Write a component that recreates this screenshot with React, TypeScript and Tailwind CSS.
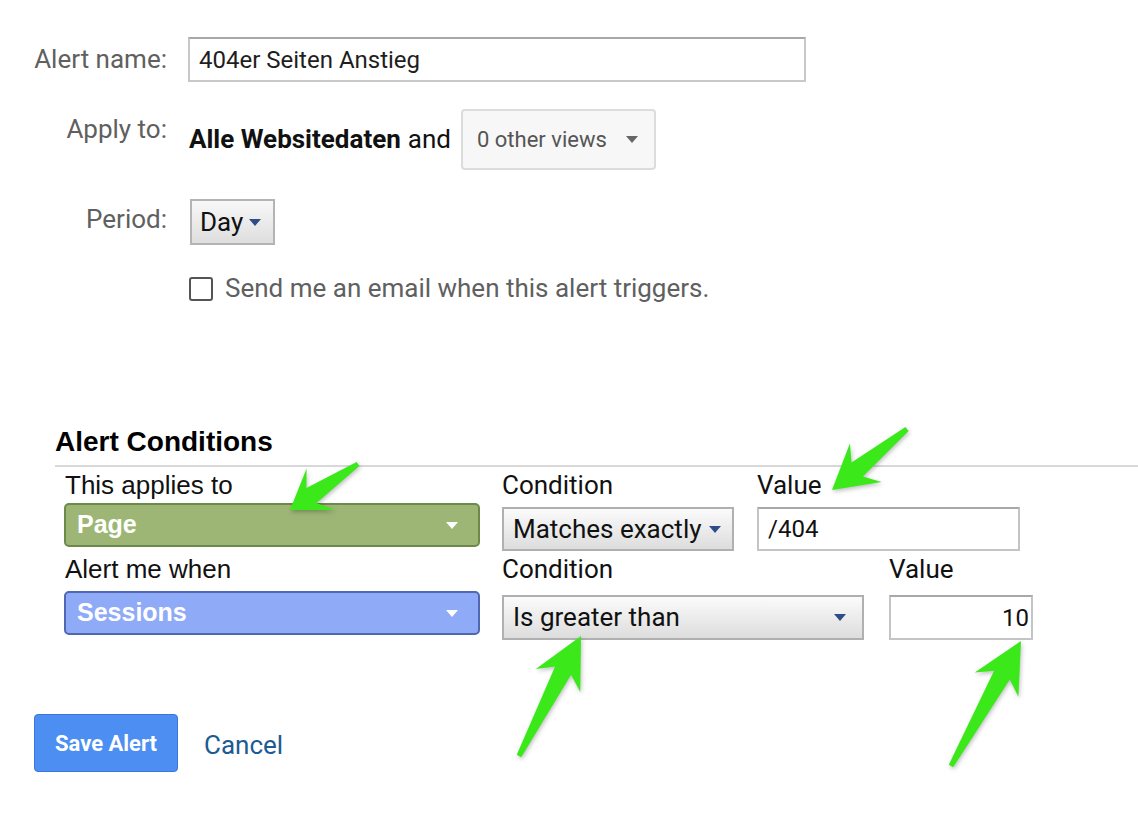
import React from "react";

type Pt = [number, number];

// green annotation arrow, drawn from tail to tip
function Arrow({ tail, tip }: { tail: Pt; tip: Pt }) {
  const dx = tip[0] - tail[0];
  const dy = tip[1] - tail[1];
  const len = Math.hypot(dx, dy);
  const ux = dx / len;
  const uy = dy / len;
  const nx = -uy;
  const ny = ux;
  const headLen = Math.min(50, len * 0.45);
  const headW = 25;
  const neckW = 9;
  const tailW = 2.5;
  const base: Pt = [tip[0] - ux * headLen, tip[1] - uy * headLen];
  const neck: Pt = [tip[0] - ux * (headLen - 11), tip[1] - uy * (headLen - 11)];
  const pts: Pt[] = [
    [tail[0] + nx * tailW, tail[1] + ny * tailW],
    [neck[0] + nx * neckW, neck[1] + ny * neckW],
    [base[0] + nx * headW, base[1] + ny * headW],
    tip,
    [base[0] - nx * headW, base[1] - ny * headW],
    [neck[0] - nx * neckW, neck[1] - ny * neckW],
    [tail[0] - nx * tailW, tail[1] - ny * tailW],
  ];
  return (
    <polygon
      points={pts.map((p) => p.join(",")).join(" ")}
      fill="#3be81a"
      style={{ filter: "drop-shadow(1px 2px 2px rgba(0,0,0,0.25))" }}
    />
  );
}

function Caret({ color }: { color: string }) {
  return (
    <svg width="12" height="7" viewBox="0 0 12 7" className="shrink-0">
      <path d="M0 0 L12 0 L6 7 Z" fill={color} />
    </svg>
  );
}

export default function App() {
  return (
    <div className="relative w-[1138px] h-[814px] overflow-hidden bg-white font-['Roboto',sans-serif]">
      {/* Alert settings */}
      <div className="pt-[37px]">
        <div className="flex items-center">
          <div className="w-[167px] text-right text-[26px] text-[#606060]">Alert name:</div>
          <div className="ml-[21px] w-[618px] h-[45px] border-2 border-[#c8c8c8] border-t-[#a8a8a8] flex items-center px-[9px] text-[24px] text-[#1e1e1e]">
            404er Seiten Anstieg
          </div>
        </div>

        <div className="flex items-start mt-[27px]">
          <div className="w-[167px] text-right text-[26px] text-[#606060] mt-[1px]">Apply to:</div>
          <div className="ml-[22px] flex items-center h-[61px] text-[26px] text-[#111]">
            <span className="font-bold">Alle Websitedaten</span>
            <span className="ml-[7px]">and</span>
            <div className="ml-[10px] w-[195px] h-[61px] rounded-[4px] border-2 border-[#dcdcdc] bg-[#f7f7f7] flex items-center justify-between pl-[14px] pr-[16px] text-[22px] text-[#555]">
              <span>0 other views</span>
              <Caret color="#666" />
            </div>
          </div>
        </div>

        <div className="flex items-start mt-[29px]">
          <div className="w-[167px] text-right text-[26px] text-[#606060] mt-[1px]">Period:</div>
          <div className="ml-[23px] w-[85px] h-[46px] border-2 border-[#b4b4b4] bg-gradient-to-b from-[#f8f8f8] to-[#dedede] flex items-center gap-[6px] pl-[8px] text-[26px] text-[#111]">
            <span>Day</span>
            <Caret color="#2f4c8a" />
          </div>
        </div>

        <div className="flex items-center mt-[24px] ml-[189px]">
          <div className="w-[24px] h-[24px] rounded-[3px] border-2 border-[#555] bg-white" />
          <span className="ml-[12px] text-[26px] text-[#606060]">Send me an email when this alert triggers.</span>
        </div>
      </div>

      {/* Alert conditions */}
      <div className="mt-[118px] font-['Liberation_Sans',sans-serif]">
        <div className="pl-[55px] text-[28px] font-bold text-black leading-[32px]">Alert Conditions</div>
        <div className="ml-[55px] mt-[7px] h-[2px] bg-[#d8d8d8]" />

        <div className="flex items-start h-[80px] pl-[64px]">
          <div className="w-[416px]">
            <div className="h-[36px] flex items-center pl-[1px] text-[26px] text-[#111]">This applies to</div>
            <div className="h-[44px] rounded-[5px] border-2 border-[#6d8a4b] bg-[#9db676] flex items-center justify-between pl-[11px] pr-[20px]">
              <span className="text-[25px] font-bold text-white">Page</span>
              <Caret color="#ffffff" />
            </div>
          </div>
          <div className="ml-[22px] w-[232px] font-['Roboto',sans-serif]">
            <div className="h-[36px] flex items-center text-[26px] text-[#111]">Condition</div>
            <div className="mt-[4px] h-[44px] border-2 border-[#b0b0b0] bg-gradient-to-b from-[#fbfbfb] to-[#dddddd] flex items-center gap-[7px] pl-[9px] text-[26px] text-[#111]">
              <span>Matches exactly</span>
              <Caret color="#2f4c8a" />
            </div>
          </div>
          <div className="ml-[23px] w-[263px] font-['Roboto',sans-serif]">
            <div className="h-[36px] flex items-center text-[26px] text-[#111]">Value</div>
            <div className="mt-[4px] h-[44px] border-2 border-[#c4c4c4] border-t-[#a8a8a8] flex items-center pl-[9px] text-[24px] text-[#111]">
              /404
            </div>
          </div>
        </div>

        <div className="flex items-start h-[88px] pl-[64px]">
          <div className="w-[416px]">
            <div className="h-[44px] flex items-center pl-[1px] text-[26px] text-[#111]">Alert me when</div>
            <div className="h-[44px] rounded-[5px] border-2 border-[#5068b2] bg-[#8fabf8] flex items-center justify-between pl-[11px] pr-[20px]">
              <span className="text-[25px] font-bold text-white">Sessions</span>
              <Caret color="#ffffff" />
            </div>
          </div>
          <div className="ml-[22px] w-[362px] font-['Roboto',sans-serif]">
            <div className="h-[44px] flex items-center text-[26px] text-[#111]">Condition</div>
            <div className="mt-[4px] h-[45px] border-2 border-[#b0b0b0] bg-gradient-to-b from-[#fbfbfb] to-[#dddddd] flex items-center justify-between pl-[9px] pr-[16px] text-[26px] text-[#111]">
              <span>Is greater than</span>
              <Caret color="#2f4c8a" />
            </div>
          </div>
          <div className="ml-[25px] w-[144px] font-['Roboto',sans-serif]">
            <div className="h-[44px] flex items-center text-[26px] text-[#111]">Value</div>
            <div className="mt-[4px] h-[45px] border-2 border-[#c4c4c4] border-t-[#a8a8a8] flex items-center justify-end pr-[2px] text-[24px] text-[#111]">
              10
            </div>
          </div>
        </div>
      </div>

      {/* Actions */}
      <div className="flex items-center mt-[79px] ml-[34px]">
        <button className="w-[144px] h-[58px] rounded-[4px] border border-[#3a78dc] bg-[#4c8ef2] text-[22px] font-bold text-white">
          Save Alert
        </button>
        <span className="ml-[26px] mt-[4px] text-[26px] text-[#1d5a93]">Cancel</span>
      </div>

      {/* Annotation arrows */}
      <svg className="absolute inset-0 pointer-events-none" width="1138" height="814">
        <Arrow tail={[358, 464]} tip={[290, 510]} />
        <Arrow tail={[907, 429]} tip={[832, 490]} />
        <Arrow tail={[519, 756]} tip={[581, 636]} />
        <Arrow tail={[951, 766]} tip={[1021, 641]} />
      </svg>
    </div>
  );
}
